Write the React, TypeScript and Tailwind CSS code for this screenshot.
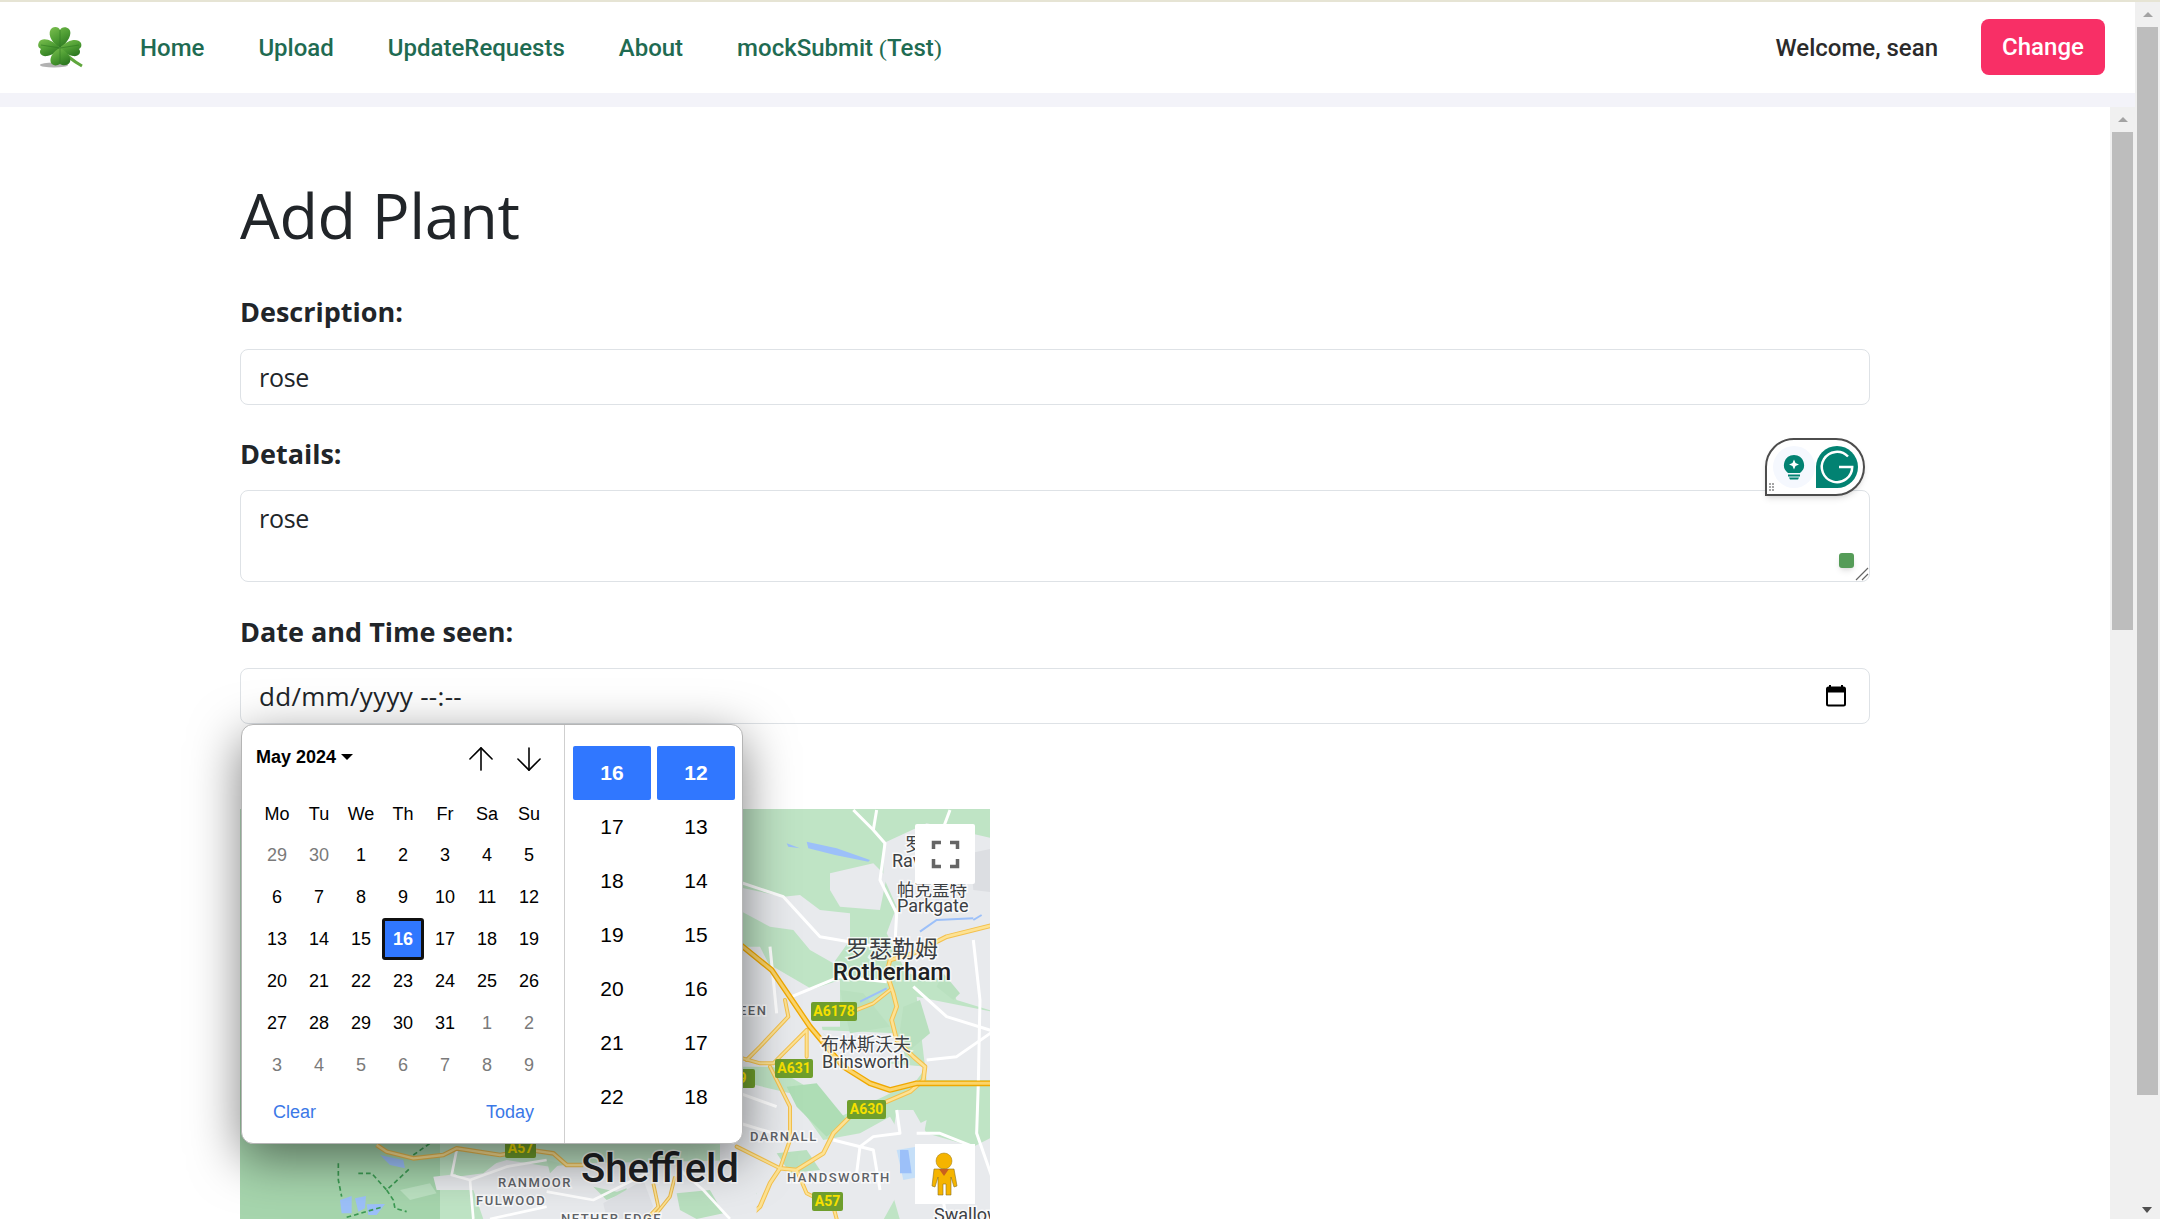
import { ArrowDown, ArrowUp } from "lucide-react";

const navLinks = ["Home", "Upload", "UpdateRequests", "About"];
const weekDays = ["Mo", "Tu", "We", "Th", "Fr", "Sa", "Su"];
const calendarDays = [
  29, 30, 1, 2, 3, 4, 5, 6, 7, 8, 9, 10, 11, 12, 13, 14, 15, 16, 17, 18, 19, 20, 21, 22, 23, 24, 25, 26, 27, 28, 29, 30,
  31, 1, 2, 3, 4, 5, 6, 7, 8, 9,
];
const hours = [17, 18, 19, 20, 21, 22];
const minutes = [13, 14, 15, 16, 17, 18];

// Clover logo from the navbar
function Clover() {
  return (
    <svg width="60" height="56" viewBox="0 0 60 56" className="block">
      <defs>
        <linearGradient id="leaf" x1="0" y1="0" x2="0.6" y2="1">
          <stop offset="0" stopColor="#7cc04f" />
          <stop offset="0.55" stopColor="#4f9e34" />
          <stop offset="1" stopColor="#2f7a22" />
        </linearGradient>
      </defs>
      <ellipse cx="24" cy="45" rx="14" ry="2.5" fill="#555" opacity="0.45" />
      <path d="M30 28 Q38 38 52 46" stroke="#5fa63c" strokeWidth="3" fill="none" />
      <path d="M30 28 C20 22 17 12 22 8 C25 6 29 7 30 10 C31 7 36 6 39 9 C43 13 38 23 30 28Z" fill="url(#leaf)" />
      <path d="M30 28 C22 19 12 17 9 22 C7 26 9 28 11 29 C8 33 12 37 17 36 C23 35 28 31 30 28Z" fill="url(#leaf)" />
      <path d="M30 28 C38 19 48 18 51 23 C52 26 51 28 49 29 C52 33 48 37 43 36 C37 35 32 31 30 28Z" fill="url(#leaf)" />
      <path d="M30 28 C23 31 19 38 21 43 C23 46 27 46 30 44 C33 46 38 46 40 42 C42 37 36 31 30 28Z" fill="url(#leaf)" />
      <path d="M30 28 L30 10 M30 28 L11 25 M30 28 L49 25 M30 28 L30 43" stroke="#2f7a22" strokeWidth="1" opacity="0.6" />
    </svg>
  );
}

function MapLabel({ x, y, text, size, anchor = "start", weight = 400, spacing = 0, fill = "#3c4043" }: {
  x: number; y: number; text: string; size: number; anchor?: "start" | "middle"; weight?: number; spacing?: number; fill?: string;
}) {
  return (
    <text
      x={x}
      y={y}
      fontSize={size}
      fontWeight={weight}
      letterSpacing={spacing}
      textAnchor={anchor}
      fill={fill}
      stroke="#ffffff"
      strokeWidth={3}
      strokeOpacity={0.75}
      paintOrder="stroke"
    >
      {text}
    </text>
  );
}

function Shield({ x, y, w, h = 19, text }: { x: number; y: number; w: number; h?: number; text: string }) {
  return (
    <g>
      <rect x={x} y={y} width={w} height={h} rx={2} fill="#6f9e2c" />
      <text x={x + w / 2} y={y + h - 5} fontSize={14} fontWeight={700} textAnchor="middle" fill="#f6e000">
        {text}
      </text>
    </g>
  );
}

// Static map picture, coordinates are page pixels (viewBox starts at the map's page position)
function MapPicture() {
  const gray = "#e8eaed";
  const green = "#b9e0bf";
  return (
    <svg viewBox="240 809 750 410" className="block w-[750px] h-[410px]" fontFamily="Roboto, 'Noto Sans CJK SC', sans-serif">
      <rect x="240" y="809" width="750" height="410" fill="#bfe4c5" />

      {/* zoomed crop coordinates of the east half */}
      <g transform="translate(740 800) scale(0.3333)">
        <path d="M270 220 L400 190 L440 230 L420 330 L300 320 L270 270Z" fill={gray} />
        <path d="M-60 250 L130 290 L180 285 L240 330 L330 340 L330 420 L280 490 L210 450 L160 390 L90 380 L-60 300Z" fill={gray} />
        <path d="M430 130 L560 70 L780 120 L780 640 L650 600 L620 540 L560 530 L500 520 L440 400 L470 320 L430 230Z" fill={gray} />
        <path d="M-60 500 L100 500 L220 570 L250 700 L330 780 L560 800 L530 840 L430 890 L300 950 L200 860 L100 800 L-60 800Z" fill={gray} />
        <path d="M240 690 L470 700 L500 780 L350 800Z" fill={gray} />
        <path d="M150 590 L300 540 L300 680 L220 680Z" fill={gray} />
        <path d="M-60 830 L150 880 L250 1020 L360 1000 L450 950 L480 1000 L560 960 L540 1060 L430 1260 L-60 1260Z" fill={gray} />
        <path d="M530 590 L780 640 L780 840 L560 840Z" fill={gray} />
        <path d="M470 930 L520 930 L560 1000 L700 1040 L780 1000 L780 1260 L480 1260 L440 1120Z" fill={gray} />
        <path d="M-60 440 L60 440 L100 520 L130 560 L60 600 L-60 620Z" fill={gray} />
        <path d="M690 160 L780 140 L780 280 L700 270Z" fill="#dcdee2" />
        <path d="M140 860 L230 850 L320 960 L260 1010 L170 920Z" fill="#aeddb5" />
        <path d="M110 1060 L200 1050 L240 1110 L150 1120Z" fill={green} />
        <path d="M0 1140 L50 1180 L30 1230 L-20 1200Z" fill={green} />
        <path d="M490 620 L540 600 L570 700 L510 750 L480 690Z" fill={green} />
        <path d="M300 570 L370 580 L450 680 L330 700Z" fill={green} />
        <path d="M610 520 L660 580 L640 600 L590 560Z" fill={green} />
        <path d="M470 1050 L530 1040 L540 1130 L490 1140Z" fill="#c5dff8" />
        <path d="M480 1050 L505 1050 L515 1120 L480 1120Z" fill="#9cc0f9" />
        <path d="M200 125 L290 145 L390 180 L385 185 L285 165 L205 145Z" fill="#9cc0f9" />
        <path d="M140 130 L180 145 L145 140Z" fill="#9cc0f9" />
        <path d="M360 605 L440 565" stroke="#9cc0f9" strokeWidth="6" fill="none" />
        <path d="M540 395 L590 360 L700 355" stroke="#9cc0f9" strokeWidth="6" fill="none" />
        <path d="M700 360 L725 345" stroke="#9cc0f9" strokeWidth="6" fill="none" />
        <g fill="none" stroke="#ffffff" strokeWidth="9" strokeLinejoin="round">
          <path d="M340 30 L400 90 L435 130 L420 240 L470 340 L465 430" />
          <path d="M410 30 L400 90" />
          <path d="M630 30 L600 110 L640 210" />
          <path d="M-20 240 L130 290 L240 410 L440 445" />
          <path d="M155 590 L300 530 L440 545" />
          <path d="M520 560 L620 650 L780 700" />
          <path d="M560 780 L650 770 L780 680" />
          <path d="M700 420 L720 600 L715 850 L710 1000 L780 1200" />
          <path d="M470 930 L480 1000 L400 1010 L360 1040 L350 1120" />
          <path d="M530 1000 L600 1000 L700 1040" />
          <path d="M560 1100 L600 1150 L620 1257" />
          <path d="M0 880 L110 920 M0 970 L100 1000" />
          <path d="M280 1020 L400 1050 L420 1170" />
          <path d="M90 440 L110 640" />
        </g>
        <g fill="none" strokeLinejoin="round" strokeLinecap="round">
          <path d="M780 370 L620 410 L520 460 L450 480 L440 520 L460 580 L470 620 L455 660 L470 720 L520 770 L555 800 L550 840 L510 875 L440 905 L330 950 L280 1000 L250 1060 L170 1110 L120 1105 L90 1150 L60 1220 L20 1257" stroke="#f3c04d" strokeWidth="14" />
          <path d="M450 570 L400 610 L350 630" stroke="#f3c04d" strokeWidth="12" />
          <path d="M200 690 L100 790 L60 790 L-10 770 M200 690 L200 770" stroke="#f3c04d" strokeWidth="12" />
          <path d="M90 800 L150 920 L150 1020 L120 1105 L-10 1040" stroke="#f3c04d" strokeWidth="12" />
          <path d="M135 600 L145 650 L60 740 L20 780" stroke="#f3c04d" strokeWidth="12" />
          <path d="M170 1110 L200 1180 L280 1220 L290 1257" stroke="#f3c04d" strokeWidth="12" />
          <path d="M780 370 L620 410 L520 460 L450 480 L440 520 L460 580 L470 620 L455 660 L470 720 L520 770 L555 800 L550 840 L510 875 L440 905 L330 950 L280 1000 L250 1060 L170 1110 L120 1105 L90 1150 L60 1220 L20 1257" stroke="#fde293" strokeWidth="8" />
          <path d="M450 570 L400 610 L350 630" stroke="#fde293" strokeWidth="6" />
          <path d="M200 690 L100 790 L60 790 L-10 770 M200 690 L200 770" stroke="#fde293" strokeWidth="6" />
          <path d="M90 800 L150 920 L150 1020 L120 1105 L-10 1040" stroke="#fde293" strokeWidth="6" />
          <path d="M135 600 L145 650 L60 740 L20 780" stroke="#fde293" strokeWidth="6" />
          <path d="M170 1110 L200 1180 L280 1220 L290 1257" stroke="#fde293" strokeWidth="6" />
          <path d="M-10 425 L95 510 L210 680 L310 800 L390 850 L450 870 L530 850 L780 850" stroke="#efa800" strokeWidth="17" />
          <path d="M-10 425 L95 510 L210 680 L310 800 L390 850 L450 870 L530 850 L780 850" stroke="#fbd46a" strokeWidth="9" />
        </g>
      </g>

      {/* zoomed crop coordinates of the south west corner */}
      <g transform="translate(230 1080) scale(0.3333)">
        <rect x="30" y="0" width="600" height="417" fill="#a6d5ad" />
        <path d="M610 290 L700 280 L830 240 L960 260 L1050 250 L1580 240 L1580 417 L760 417 L730 330 L620 330Z" fill={gray} />
        <path d="M660 240 L810 240 L760 280 L680 290Z" fill={green} />
        <path d="M510 330 L600 310 L620 340 L540 360Z" fill="#bce2c2" />
        <path d="M1090 320 L1180 340 L1130 360Z M950 240 L990 250 L960 280Z M1150 340 L1190 325 L1190 350Z" fill={green} />
        <path d="M1340 340 L1440 330 L1480 400 L1400 417 L1350 390Z" fill={green} />
        <path d="M1240 300 L1270 380 L1240 417 L1130 417 L1120 370Z" fill="#dfe1e5" />
        <path d="M450 225 L520 240 L525 265 L480 255Z M330 360 L365 348 L365 400 L335 400Z M375 355 L408 348 L405 385 L385 395Z M410 373 L465 372 L440 405 L415 405Z" fill="#9cc0f9" />
        <g fill="none" stroke="#3b9a52" strokeWidth="5" strokeDasharray="14 9">
          <path d="M325 250 L325 300 L335 350" />
          <path d="M385 280 L425 280 L470 330 L540 265" />
          <path d="M470 330 L490 360 L495 385 L530 395" />
          <path d="M350 412 L460 380" />
          <path d="M550 225 L600 190" />
        </g>
        <g fill="none" stroke="#ffffff" strokeWidth="8" strokeLinejoin="round">
          <path d="M680 210 L665 285 L720 300 L830 260 L950 240" />
          <path d="M720 300 L730 417" />
          <path d="M950 335 L1090 360 L1250 280" />
          <path d="M1340 260 L1420 330 L1500 417" />
          <path d="M780 417 L950 380" />
        </g>
        <g fill="none" strokeLinejoin="round">
          <path d="M440 195 L470 215 L550 235 L640 225 L680 205 L810 225 L900 210 L970 220 L1010 255 L1060 255" stroke="#e8b94f" strokeWidth="14" />
          <path d="M1270 310 L1285 380 L1250 417 M1335 290 L1320 350 L1280 400" stroke="#e8b94f" strokeWidth="11" />
          <path d="M440 195 L470 215 L550 235 L640 225 L680 205 L810 225 L900 210 L970 220 L1010 255 L1060 255" stroke="#fde293" strokeWidth="7" />
          <path d="M1270 310 L1285 380 L1250 417 M1335 290 L1320 350 L1280 400" stroke="#fde293" strokeWidth="5" />
        </g>
      </g>

      <Shield x={811} y={1002} w={46} text="A6178" />
      <Shield x={775} y={1059} w={38} text="A631" />
      <Shield x={847} y={1100} w={39} text="A630" />
      <Shield x={812} y={1192} w={31} text="A57" />
      <Shield x={505} y={1139} w={31} text="A57" />
      <Shield x={730} y={1069} w={25} text="  9" />

      <MapLabel x={892} y={957} text="罗瑟勒姆" size={23} anchor="middle" />
      <MapLabel x={892} y={980} text="Rotherham" size={24} anchor="middle" weight={500} fill="#202124" />
      <MapLabel x={897} y={896} text="帕克盖特" size={17.5} />
      <MapLabel x={897} y={912} text="Parkgate" size={18} />
      <MapLabel x={892} y={867} text="Rav" size={18} />
      <MapLabel x={905} y={851} text="罗" size={18} />
      <MapLabel x={821} y={1051} text="布林斯沃夫" size={18} />
      <MapLabel x={822} y={1068} text="Brinsworth" size={18} />
      <MapLabel x={739} y={1015} text="EEN" size={13} weight={500} spacing={1.5} fill="#5f6368" />
      <MapLabel x={750} y={1141} text="DARNALL" size={13} weight={500} spacing={1.5} fill="#5f6368" />
      <MapLabel x={787} y={1182} text="HANDSWORTH" size={13} weight={500} spacing={1.5} fill="#5f6368" />
      <MapLabel x={498} y={1187} text="RANMOOR" size={13} weight={500} spacing={1.5} fill="#5f6368" />
      <MapLabel x={476} y={1205} text="FULWOOD" size={13} weight={500} spacing={1.5} fill="#5f6368" />
      <MapLabel x={561} y={1223} text="NETHER EDGE" size={13} weight={500} spacing={1.5} fill="#5f6368" />
      <MapLabel x={581} y={1182} text="Sheffield" size={40} weight={500} fill="#202124" />
      <MapLabel x={934} y={1221} text="Swallow" size={18} />

      {/* fullscreen control */}
      <rect x="915" y="824" width="60" height="60" rx="2" fill="#ffffff" />
      <path d="M933.500 849 V842.500 H941 M950 842.500 H957.500 V849 M957.500 859 V866.500 H950 M941 866.500 H933.500 V859" fill="none" stroke="#666666" strokeWidth="3.500" />

      {/* street view pegman */}
      <rect x="915" y="1144" width="60" height="60" fill="#ffffff" />
      <circle cx="944" cy="1161" r="8" fill="#f5b400" stroke="#9a7a1a" strokeWidth="0.5" />
      <path d="M934 1169 H954 L957 1186 L954 1187 L951 1177 V1195 H946 V1184 H943 V1195 H938 V1177 L935 1187 L932 1186Z" fill="#f5b400" stroke="#8a7020" strokeWidth="0.6" />
      <path d="M939 1169 H949 L944 1176Z" fill="#c9601d" />
    </svg>
  );
}

// Chrome date picker popup that lies over the form
function DatePickerPopup() {
  return (
    <div className="absolute left-[1px] top-[56px] z-10 flex h-[420px] w-[502px] overflow-hidden rounded-xl border border-[#b5b5b5] bg-white font-['Liberation_Sans',sans-serif] text-black shadow-[0_14px_50px_rgba(0,0,0,0.5)]">
      <div className="flex w-[323px] flex-col border-r border-[#cfcfcf] px-[14px]">
        <div className="flex h-[67px] items-center pb-[3px]">
          <span className="text-[18px] font-bold leading-none">May 2024</span>
          <span className="ml-[5px] h-0 w-0 border-x-[6px] border-t-[6px] border-x-transparent border-t-black" />
          <ArrowUp className="ml-auto h-[38px] w-[38px] translate-y-[2px]" strokeWidth={1} />
          <ArrowDown className="ml-[10px] mr-[2px] h-[38px] w-[38px] translate-y-[2px]" strokeWidth={1} />
        </div>
        <div className="grid grid-cols-[repeat(7,42px)] text-center text-[18px]">
          {weekDays.map((day) => (
            <div key={day} className="flex h-[42px] items-center justify-center pt-[2px]">
              {day}
            </div>
          ))}
          {calendarDays.map((day, i) => {
            const outside = i < 2 || i > 32;
            const selected = i === 17;
            return (
              <div
                key={i}
                className={
                  selected
                    ? "flex h-[42px] items-center justify-center rounded-[3px] border-[3px] border-[#101010] bg-[#3077ff] font-bold text-white"
                    : outside
                      ? "flex h-[42px] items-center justify-center text-[#7a7a7a]"
                      : "flex h-[42px] items-center justify-center"
                }
              >
                {day}
              </div>
            );
          })}
        </div>
        <div className="flex justify-between pl-[17px] pr-[16px] pt-[13px] text-[18px] text-[#3b78e7]">
          <span>Clear</span>
          <span>Today</span>
        </div>
      </div>
      <div className="grid flex-1 grid-cols-2 content-start gap-x-[6px] pl-[8px] pr-[7px] pt-[21px] text-[21px]">
        <div className="flex h-[54px] items-center justify-center rounded-[2px] bg-[#3077ff] font-bold text-white">16</div>
        <div className="flex h-[54px] items-center justify-center rounded-[2px] bg-[#3077ff] font-bold text-white">12</div>
        {hours.map((hour, i) => (
          <div key={hour} className="contents">
            <div className="flex h-[54px] items-center justify-center">{hour}</div>
            <div className="flex h-[54px] items-center justify-center">{minutes[i]}</div>
          </div>
        ))}
      </div>
    </div>
  );
}

// Grammarly floating widget on the textarea
function GrammarlyWidget() {
  return (
    <div className="absolute -top-[52px] right-[5px] z-10 flex h-[58px] w-[100px] items-center rounded-t-[29px] rounded-br-[29px] border-2 border-[#4d4d4d] bg-white pl-[6px] shadow-md">
      <div className="flex h-[42px] w-[42px] items-center justify-center rounded-full bg-[#f5f8fe]">
        <svg width="22" height="26" viewBox="0 0 22 26">
          <path d="M11 1a10 10 0 0 0-6 18h12a10 10 0 0 0-6-18Z" fill="#028272" />
          <path d="M11 5.500 12.500 9 16 10.500 12.500 12 11 15.500 9.500 12 6 10.500 9.500 9Z" fill="#ffffff" />
          <rect x="5" y="20.500" width="12" height="2" fill="#028272" />
          <path d="M6 23.500h10l-1 2H7Z" fill="#028272" />
        </svg>
      </div>
      <svg width="42" height="42" viewBox="0 0 42 42" className="ml-[1px]">
        <path d="M21 0a21 21 0 0 1 0 42H0V21A21 21 0 0 1 21 0Z" fill="#028272" />
        <path d="M32 10.500A15.200 15.200 0 1 0 36.200 21H23" fill="none" stroke="#ffffff" strokeWidth="2.500" />
      </svg>
      <div className="absolute bottom-[3px] left-[2px] grid grid-cols-2 gap-[1px]">
        {[0, 1, 2, 3, 4, 5].map((i) => (
          <span key={i} className="h-[2px] w-[2px] bg-[#a5a5a5]" />
        ))}
      </div>
    </div>
  );
}

function Scrollbar({ thumbClass, upClass }: { thumbClass: string; upClass: string }) {
  return (
    <div className="flex h-full w-[25px] shrink-0 flex-col bg-[#f0f0f0]">
      <div className="flex h-[25px] items-center justify-center">
        <span className={upClass} />
      </div>
      <div className={thumbClass} />
    </div>
  );
}

export default function App() {
  return (
    <div className="flex h-[1219px] w-full flex-col overflow-hidden border-t-2 border-[#e6e4d4] bg-white font-['Open_Sans',sans-serif] text-[#212529]">
      <div className="flex min-h-0 flex-1">
        <div className="flex min-w-0 flex-1 flex-col">
          {/* Navbar */}
          <nav className="flex h-[91px] shrink-0 items-center bg-white pl-[30px] pr-[30px] font-['Roboto',sans-serif] text-[24px] font-medium">
            <Clover />
            <div className="ml-[50px] flex gap-[54px] text-[#1f6b52]">
              {navLinks.map((link) => (
                <span key={link}>{link}</span>
              ))}
              <span>
                mockSubmit <span className="font-['Liberation_Serif',serif] font-normal">(</span>Test
                <span className="font-['Liberation_Serif',serif] font-normal">)</span>
              </span>
            </div>
            <span className="ml-auto text-[#2b2b2b]">Welcome, sean</span>
            <button className="mb-[1px] ml-[43px] h-[56px] w-[124px] rounded-lg bg-[#f82f66] text-white">Change</button>
          </nav>
          <div className="h-[14px] shrink-0 bg-[#f3f3f9]" />

          <div className="flex min-h-0 flex-1">
            <main className="min-w-0 flex-1 overflow-hidden pl-[240px] pr-[240px]">
              <h1 className="mt-[66px] text-[63px] font-normal leading-[84px] tracking-[-0.4px]">Add Plant</h1>
              <form className="relative">
                <label className="mt-[36px] block text-[27px] font-bold leading-[38px]">Description:</label>
                <input
                  readOnly
                  value="rose"
                  className="mt-[18px] block h-[56px] w-full rounded-lg border border-[#dee2e6] px-[18px] text-[25px] tracking-[-0.3px] outline-none"
                />
                <label className="mt-[30px] block text-[27px] font-bold leading-[38px]">Details:</label>
                <div className="relative mt-[17px]">
                  <GrammarlyWidget />
                  <textarea
                    readOnly
                    value="rose"
                    className="block h-[92px] w-full resize-none rounded-lg border border-[#dee2e6] px-[18px] py-[9px] text-[25px] tracking-[-0.3px] outline-none"
                  />
                  <span className="absolute bottom-[14px] right-[16px] h-[15px] w-[15px] rounded-[3px] bg-[#559c58] shadow-md" />
                  <svg width="14" height="14" viewBox="0 0 14 14" className="absolute bottom-[1px] right-[1px]">
                    <path d="M1 13 13 1M7 13 13 7" stroke="#666666" strokeWidth="1.200" />
                  </svg>
                </div>
                <label className="mt-[31px] block text-[27px] font-bold leading-[38px]">Date and Time seen:</label>
                <div className="relative mt-[17px]">
                  <div className="flex h-[56px] items-center justify-between rounded-lg border border-[#dee2e6] pl-[18px] pr-[22px] text-[26px] tracking-[0.3px]">
                    <span>dd/mm/yyyy --:--</span>
                    <svg width="22" height="24" viewBox="0 0 22 24">
                      <path d="M5 1v3M17 1v3" stroke="#000" strokeWidth="2" />
                      <rect x="2" y="3.500" width="18" height="18" rx="1.500" fill="none" stroke="#000" strokeWidth="2" />
                      <rect x="2" y="3.500" width="18" height="5" fill="#000" />
                    </svg>
                  </div>
                  <DatePickerPopup />
                </div>
                <div className="mt-[85px] w-[750px]">
                  <MapPicture />
                </div>
              </form>
            </main>
            <Scrollbar
              upClass="h-0 w-0 border-x-[5px] border-b-[5px] border-x-transparent border-b-[#a3a3a3]"
              thumbClass="mx-[2px] h-[498px] bg-[#bdbdbd]"
            />
          </div>
        </div>
        <div className="relative">
          <Scrollbar
            upClass="h-0 w-0 border-x-[5px] border-b-[5px] border-x-transparent border-b-[#a3a3a3]"
            thumbClass="mx-[2px] h-[1068px] bg-[#bdbdbd]"
          />
          <span className="absolute bottom-[6px] left-[7px] h-0 w-0 border-x-[5px] border-t-[6px] border-x-transparent border-t-[#505050]" />
        </div>
      </div>
    </div>
  );
}
